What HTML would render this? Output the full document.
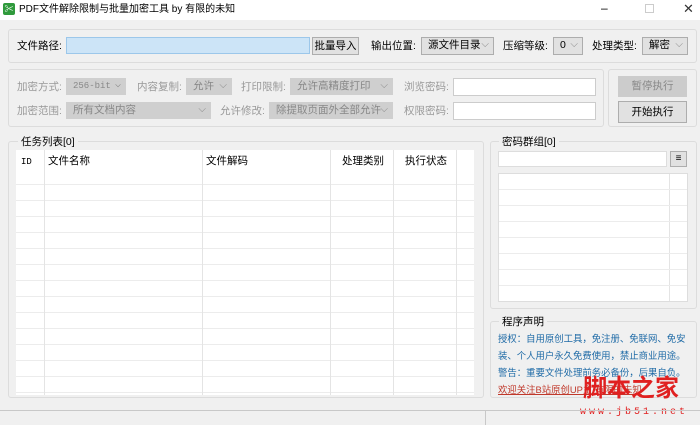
<!DOCTYPE html>
<html><head><meta charset="utf-8"><style>
*{margin:0;padding:0;box-sizing:border-box}
body{width:700px;height:425px;background:#f0f0f0;position:relative;overflow:hidden;font-family:"Liberation Sans","Noto Sans CJK SC",sans-serif;font-size:10.5px;color:#000}
.a{position:absolute;white-space:nowrap;line-height:12px}
.box{position:absolute;border:1px solid #dcdcdc;border-radius:3px}
.in{position:absolute;background:#fff;border:1px solid #b8b8b8}
.sel{position:absolute;background:#e1e1e1;border:1px solid #adadad;padding-left:6px;line-height:15px;white-space:nowrap;overflow:hidden}
.sel::after{content:"⌵";position:absolute;right:4px;top:-1px;color:#888;font-size:10px}
.dis{background:#cfcfcf;border-color:#cfcfcf;color:#888}
.btn{position:absolute;background:#e1e1e1;border:1px solid #adadad;text-align:center}
.g{color:#999}
.vl{position:absolute;width:1px;background:#e4e4e4}
.hl{position:absolute;height:1px;background:#ececec}
.st{font-size:9.4px;color:#1e6aa6}
</style></head><body>
<div class="a" style="left:0;top:0;width:700px;height:20px;background:#fff"></div>
<div class="a" style="left:3px;top:3px;width:12px;height:12px;background:#2f9a3c;border-radius:2px;color:#fff;font-size:9px;line-height:12px;text-align:center">✂</div>
<div class="a" style="left:19px;top:4px;font-size:10px">PDF文件解除限制与批量加密工具 by 有限的未知</div>
<div class="a" style="left:601px;top:2px;font-size:12px">–</div>
<div class="a" style="left:645px;top:4px;width:9px;height:9px;border:1px solid #ccc"></div>
<div class="a" style="left:683px;top:3px;font-size:13px;color:#333">✕</div>

<div class="box" style="left:8px;top:29px;width:689px;height:34px"></div>
<div class="a" style="left:17px;top:40px">文件路径:</div>
<div class="in" style="left:66px;top:37px;width:244px;height:17px;background:#cce4f7;border-color:#9cc7ea"></div>
<div class="btn" style="left:312px;top:37px;width:47px;height:18px;line-height:16px">批量导入</div>
<div class="a" style="left:371px;top:40px">输出位置:</div>
<div class="sel" style="left:421px;top:37px;width:73px;height:18px">源文件目录</div>
<div class="a" style="left:503px;top:40px">压缩等级:</div>
<div class="sel" style="left:553px;top:37px;width:30px;height:18px">0</div>
<div class="a" style="left:592px;top:40px">处理类型:</div>
<div class="sel" style="left:642px;top:37px;width:46px;height:18px">解密</div>

<div class="box" style="left:8px;top:69px;width:596px;height:58px"></div>
<div class="a g" style="left:17px;top:81px">加密方式:</div>
<div class="sel dis" style="left:66px;top:78px;width:60px;height:17px;font-family:'Liberation Mono',monospace;font-size:9px">256-bit</div>
<div class="a g" style="left:137px;top:81px">内容复制:</div>
<div class="sel dis" style="left:186px;top:78px;width:46px;height:17px">允许</div>
<div class="a g" style="left:241px;top:81px">打印限制:</div>
<div class="sel dis" style="left:290px;top:78px;width:103px;height:17px">允许高精度打印</div>
<div class="a g" style="left:404px;top:81px">浏览密码:</div>
<div class="in" style="left:453px;top:78px;width:143px;height:18px;border-color:#ccc"></div>
<div class="a g" style="left:17px;top:105px">加密范围:</div>
<div class="sel dis" style="left:66px;top:102px;width:145px;height:17px">所有文档内容</div>
<div class="a g" style="left:220px;top:105px">允许修改:</div>
<div class="sel dis" style="left:269px;top:102px;width:124px;height:17px">除提取页面外全部允许</div>
<div class="a g" style="left:404px;top:105px">权限密码:</div>
<div class="in" style="left:453px;top:102px;width:143px;height:18px;border-color:#ccc"></div>

<div class="box" style="left:608px;top:69px;width:89px;height:58px"></div>
<div class="btn" style="left:618px;top:76px;width:69px;height:21px;line-height:19px;background:#ccc;border-color:#ccc;color:#888">暂停执行</div>
<div class="btn" style="left:618px;top:101px;width:69px;height:22px;line-height:20px">开始执行</div>

<div class="box" style="left:8px;top:141px;width:476px;height:257px"></div>
<div class="a" style="left:18px;top:136px;background:#f0f0f0;padding:0 3px">任务列表[0]</div>
<div class="a" style="left:16px;top:150px;width:458px;height:245px;background:#fff"></div>
<div class="hl" style="left:16px;top:184px;width:458px"></div>
<div class="hl" style="left:16px;top:200px;width:458px"></div>
<div class="hl" style="left:16px;top:216px;width:458px"></div>
<div class="hl" style="left:16px;top:232px;width:458px"></div>
<div class="hl" style="left:16px;top:248px;width:458px"></div>
<div class="hl" style="left:16px;top:264px;width:458px"></div>
<div class="hl" style="left:16px;top:280px;width:458px"></div>
<div class="hl" style="left:16px;top:296px;width:458px"></div>
<div class="hl" style="left:16px;top:312px;width:458px"></div>
<div class="hl" style="left:16px;top:328px;width:458px"></div>
<div class="hl" style="left:16px;top:344px;width:458px"></div>
<div class="hl" style="left:16px;top:360px;width:458px"></div>
<div class="hl" style="left:16px;top:376px;width:458px"></div>
<div class="hl" style="left:16px;top:392px;width:458px"></div>
<div class="vl" style="left:44px;top:150px;height:245px"></div>
<div class="vl" style="left:202px;top:150px;height:245px"></div>
<div class="vl" style="left:330px;top:150px;height:245px"></div>
<div class="vl" style="left:393px;top:150px;height:245px"></div>
<div class="vl" style="left:456px;top:150px;height:245px"></div>
<div class="a" style="left:21px;top:156px;font-family:'Liberation Mono',monospace;font-size:9px">ID</div>
<div class="a" style="left:48px;top:155px">文件名称</div>
<div class="a" style="left:206px;top:155px">文件解码</div>
<div class="a" style="left:342px;top:155px">处理类别</div>
<div class="a" style="left:405px;top:155px">执行状态</div>

<div class="box" style="left:490px;top:141px;width:207px;height:168px"></div>
<div class="a" style="left:499px;top:136px;background:#f0f0f0;padding:0 3px">密码群组[0]</div>
<div class="in" style="left:498px;top:151px;width:169px;height:16px;border-color:#ddd"></div>
<div class="btn" style="left:670px;top:151px;width:17px;height:16px;line-height:14px;font-size:10px">≡</div>
<div class="a" style="left:498px;top:173px;width:190px;height:129px;background:#fff;border:1px solid #ddd"></div>
<div class="vl" style="left:669px;top:174px;height:127px"></div>
<div class="hl" style="left:499px;top:189px;width:188px"></div>
<div class="hl" style="left:499px;top:205px;width:188px"></div>
<div class="hl" style="left:499px;top:221px;width:188px"></div>
<div class="hl" style="left:499px;top:237px;width:188px"></div>
<div class="hl" style="left:499px;top:253px;width:188px"></div>
<div class="hl" style="left:499px;top:269px;width:188px"></div>
<div class="hl" style="left:499px;top:285px;width:188px"></div>

<div class="box" style="left:490px;top:321px;width:207px;height:77px"></div>
<div class="a" style="left:499px;top:316px;background:#f0f0f0;padding:0 3px">程序声明</div>
<div class="a st" style="left:498px;top:333px">授权：自用原创工具，免注册、免联网、免安</div>
<div class="a st" style="left:498px;top:350px">装、个人用户永久免费使用，禁止商业用途。</div>
<div class="a st" style="left:498px;top:367px">警告：重要文件处理前务必备份，后果自负。</div>
<div class="a st" style="left:498px;top:384px;color:#c0392b;text-decoration:underline">欢迎关注B站原创UP主 有限的未知</div>
<div class="a" style="left:583px;top:372px;color:#e02020;font-size:24px;line-height:28px;font-family:'Noto Sans CJK SC',sans-serif;font-weight:bold">脚本之家</div>
<div class="a" style="left:580px;top:407px;color:#e02020;font-size:10px;letter-spacing:3px;font-family:'Liberation Mono',monospace">www.jb51.net</div>

<div class="a" style="left:0;top:410px;width:700px;height:1px;background:#c8c8c8"></div>
<div class="a" style="left:485px;top:411px;width:1px;height:14px;background:#c8c8c8"></div>
</body></html>
